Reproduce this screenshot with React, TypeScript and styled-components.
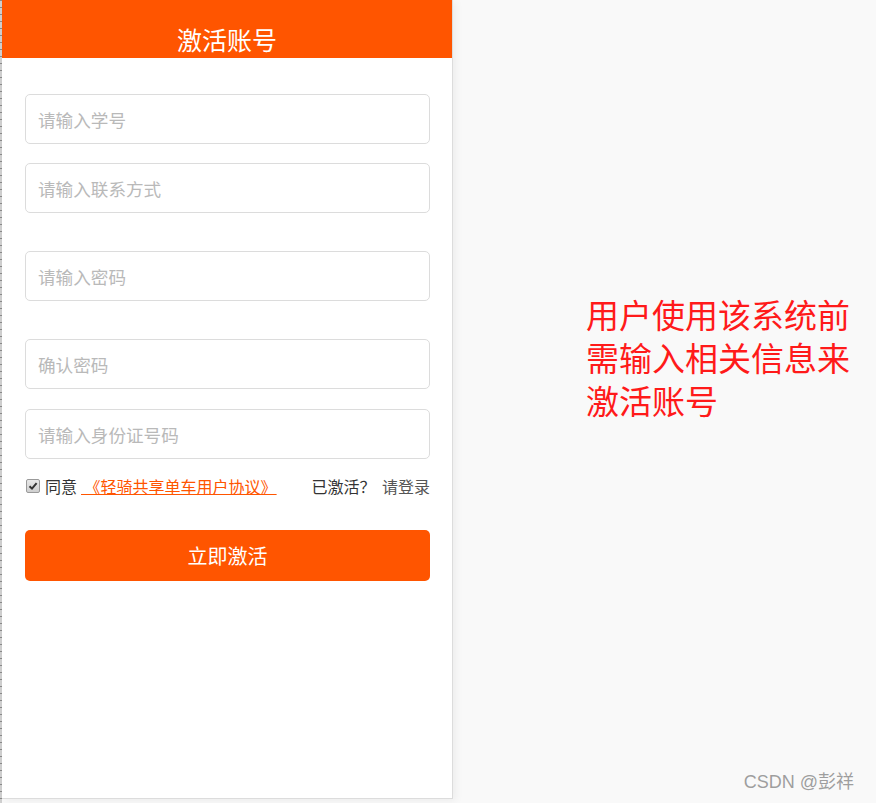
import React from "react";
import styled, { createGlobalStyle } from "styled-components";

const Global = createGlobalStyle`
  html, body { margin: 0; padding: 0; }
  body {
    background: #f9f9f9;
    font-family: "Noto Sans CJK SC", "Noto Sans", sans-serif;
    width: 876px;
    height: 803px;
    overflow: hidden;
  }
`;

const Page = styled.div`
  display: flex;
  align-items: flex-start;
  height: 803px;
  position: relative;
`;

const Rail = styled.div`
  width: 2px;
  height: 803px;
  flex: none;
  background: repeating-linear-gradient(to bottom, #8a8a8a 0 1px, #cfcfcf 1px 7px);
`;

const Panel = styled.div`
  width: 450px;
  height: 798px;
  flex: none;
  background: #fff;
  border-right: 1px solid #dcdcdc;
  border-bottom: 1px solid #dcdcdc;
  box-shadow: 3px 2px 8px rgba(0, 0, 0, 0.05);
  display: flex;
  flex-direction: column;
`;

const Header = styled.div`
  height: 58px;
  background: #ff5500;
  color: #fff;
  font-size: 25px;
  line-height: 25px;
  display: flex;
  align-items: flex-end;
  justify-content: center;
  padding-bottom: 6px;
  box-sizing: border-box;
`;

const Form = styled.div`
  display: flex;
  flex-direction: column;
  padding: 36px 22px 0 23px;
`;

const Field = styled.input<{ $gap: number }>`
  height: 50px;
  box-sizing: border-box;
  border: 1px solid #dcdcdc;
  border-radius: 5px;
  padding: 0 12px;
  font-family: inherit;
  font-size: 17.6px;
  outline: none;
  margin-top: ${(p) => p.$gap}px;
  &::placeholder { color: #b9b9b9; }
`;

const AgreeRow = styled.div`
  margin-top: 16px;
  display: flex;
  align-items: center;
  justify-content: space-between;
  font-size: 16px;
  line-height: 22px;
  color: #333;
`;

const Agree = styled.div`
  display: flex;
  align-items: center;
`;

const Check = styled.span`
  width: 12px;
  height: 12px;
  margin: 0 5px 0 1px;
  border: 1px solid #9a9a9a;
  border-radius: 2px;
  background: linear-gradient(#e8e8e8, #cfcfcf);
  display: flex;
  align-items: center;
  justify-content: center;
`;

const Protocol = styled.a`
  margin-left: 4px;
  padding-right: 2px;
  color: #ff5500;
  text-decoration: underline;
  white-space: pre;
`;

const LoginHint = styled.div`
  color: #333;
  white-space: pre;
  & span { color: #555; margin-left: 3px; }
`;

const Submit = styled.button`
  margin-top: 33px;
  height: 51px;
  border: 0;
  border-radius: 5px;
  background: #ff5500;
  color: #fff;
  font-family: inherit;
  font-size: 20px;
`;

const Note = styled.div`
  padding: 293px 0 0 133px;
  color: #ff1a1a;
  font-size: 33px;
  line-height: 43px;
  width: 270px;
`;

const Watermark = styled.div`
  position: absolute;
  right: 22px;
  bottom: 10px;
  font-size: 18px;
  color: #9e9e9e;
  font-family: "Liberation Sans", "Noto Sans CJK SC", sans-serif;
  text-shadow: 0 0 1px #fff;
`;

export default function App() {
  return (
    <>
      <Global />
      <Page>
        <Rail />
        <Panel>
          <Header>激活账号</Header>
          <Form>
            <Field $gap={0} placeholder="请输入学号" />
            <Field $gap={19} placeholder="请输入联系方式" />
            <Field $gap={38} placeholder="请输入密码" type="password" />
            <Field $gap={38} placeholder="确认密码" type="password" />
            <Field $gap={20} placeholder="请输入身份证号码" />
            <AgreeRow>
              <Agree>
                <Check>
                  <svg width="10" height="10" viewBox="0 0 10 10">
                    <path d="M1.5 5.2 L4 7.6 L8.6 2.2" stroke="#333" strokeWidth="2" fill="none" />
                  </svg>
                </Check>
                同意<Protocol> 《轻骑共享单车用户协议》</Protocol>
              </Agree>
              <LoginHint>
                已激活？ <span>请登录</span>
              </LoginHint>
            </AgreeRow>
            <Submit>立即激活</Submit>
          </Form>
        </Panel>
        <Note>用户使用该系统前需输入相关信息来激活账号</Note>
        <Watermark>CSDN @彭祥</Watermark>
      </Page>
    </>
  );
}
